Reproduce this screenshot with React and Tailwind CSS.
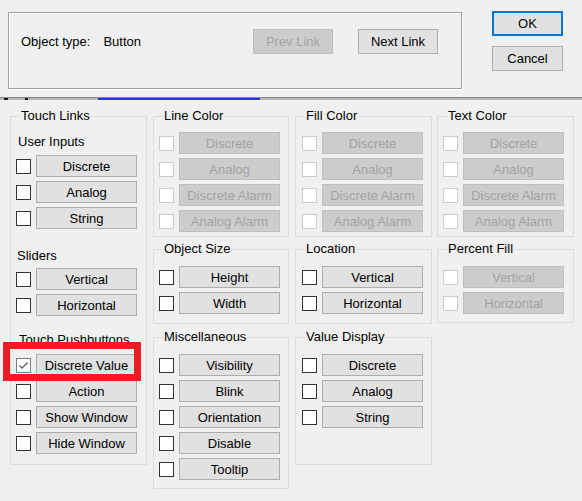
import React from "react";

function Check({ checked, disabled }) {
  return (
    <span
      className={`w-[15px] h-[15px] shrink-0 border bg-white flex items-center justify-center ${
        disabled ? "border-[#cccccc]" : checked ? "border-[#808080]" : "border-[#333333]"
      }`}
    >
      {checked && (
        <svg width="11" height="11" viewBox="0 0 11 11">
          <polyline points="1.5,5.5 4,8 9.5,2.5" fill="none" stroke="#606060" strokeWidth="1.4" />
        </svg>
      )}
    </span>
  );
}

function Btn({ children, disabled, className = "" }) {
  return (
    <div
      className={`h-[22px] w-[101px] flex items-center justify-center border text-[13px] leading-none ${
        disabled ? "bg-[#cccccc] border-[#bfbfbf] text-[#a3a3a3]" : "bg-[#e1e1e1] border-[#adadad] text-black"
      } ${className}`}
    >
      {children}
    </div>
  );
}

function Row({ label, disabled, checked }) {
  return (
    <div className="flex items-center gap-[5px]">
      <Check disabled={disabled} checked={checked} />
      <Btn disabled={disabled}>{label}</Btn>
    </div>
  );
}

function Rows({ items, disabled, className = "" }) {
  return (
    <div className={`flex flex-col gap-[4px] ${className}`}>
      {items.map((it) => (
        <Row key={it} label={it} disabled={disabled} />
      ))}
    </div>
  );
}

function Group({ title, h, children }) {
  return (
    <div className={`relative border border-[#dcdcdc] pl-[5px] ${h}`}>
      <span className="absolute -top-[9px] left-[9px] px-[1px] bg-[#f0f0f0] text-[13px] leading-[16px] text-black">
        {title}
      </span>
      {children}
    </div>
  );
}

const colorItems = ["Discrete", "Analog", "Discrete Alarm", "Analog Alarm"];

export default function App() {
  return (
    <div className="relative w-[582px] h-[501px] bg-[#f0f0f0] overflow-hidden font-['Liberation_Sans',Arial,sans-serif] text-[13px] text-black">
      {/* top panel */}
      <div className="h-[97px] flex items-start">
        <div className="ml-[8px] mt-[12px] w-[454px] h-[77px] border border-[#a0a0a0] shadow-[inset_1px_1px_0_#ffffff,1px_1px_0_#ffffff] flex items-start pt-[16px] pl-[12px] pr-[23px]">
          <div className="h-[25px] flex items-center">
            <span>Object type:</span>
            <span className="ml-[13px]">Button</span>
          </div>
          <div className="ml-auto flex gap-[25px]">
            <div className="w-[80px] h-[25px] flex items-center justify-center border border-[#bfbfbf] bg-[#cccccc] text-[#a3a3a3]">
              Prev Link
            </div>
            <div className="w-[80px] h-[25px] flex items-center justify-center border border-[#adadad] bg-[#e1e1e1]">
              Next Link
            </div>
          </div>
        </div>
        <div className="ml-[30px] mt-[11px] flex flex-col gap-[10px]">
          <div className="w-[71px] h-[25px] flex items-center justify-center border-2 border-[#0078d7] bg-[#e1e1e1]">
            OK
          </div>
          <div className="w-[71px] h-[25px] flex items-center justify-center border border-[#adadad] bg-[#e1e1e1]">
            Cancel
          </div>
        </div>
      </div>

      {/* divider */}
      <div className="h-[1px] bg-[#8a8a8a]" />
      <div className="h-[2px] bg-[#b4b4b4] flex">
        <span className="ml-[4px] w-[4px] bg-[#1a1a1a]" />
        <span className="ml-[17px] w-[3px] bg-[#1a1a1a]" />
        <span className="ml-[70px] w-[162px] bg-[#2438d8]" />
      </div>

      {/* link groups */}
      <div className="pt-[16px] pl-[10px] flex items-start">
        <div className="w-[137px]">
          <Group title="Touch Links" h="h-[349px]">
            <div className="mt-[17px] ml-[2px] leading-[16px]">User Inputs</div>
            <Rows items={["Discrete", "Analog", "String"]} className="mt-[5px]" />
            <div className="mt-[19px] ml-[1px] leading-[16px]">Sliders</div>
            <Rows items={["Vertical", "Horizontal"]} className="mt-[4px]" />
            <div className="mt-[16px] ml-[3px] leading-[16px]">Touch Pushbuttons</div>
            <div className="mt-[6px] flex flex-col gap-[4px]">
              <Row label="Discrete Value" checked />
              <Row label="Action" />
              <Row label="Show Window" />
              <Row label="Hide Window" />
            </div>
          </Group>
        </div>

        <div className="ml-[6px] w-[136px] flex flex-col">
          <Group title="Line Color" h="h-[121px]">
            <Rows items={colorItems} disabled className="mt-[15px]" />
          </Group>
          <div className="mt-[12px]">
            <Group title="Object Size" h="h-[75px]">
              <Rows items={["Height", "Width"]} className="mt-[16px]" />
            </Group>
          </div>
          <div className="mt-[13px]">
            <Group title="Miscellaneous" h="h-[152px]">
              <Rows items={["Visibility", "Blink", "Orientation", "Disable", "Tooltip"]} className="mt-[16px]" />
            </Group>
          </div>
        </div>

        <div className="ml-[6px] w-[137px] flex flex-col">
          <Group title="Fill Color" h="h-[121px]">
            <Rows items={colorItems} disabled className="mt-[15px] ml-[1px]" />
          </Group>
          <div className="mt-[12px]">
            <Group title="Location" h="h-[75px]">
              <Rows items={["Vertical", "Horizontal"]} className="mt-[16px] ml-[1px]" />
            </Group>
          </div>
          <div className="mt-[13px]">
            <Group title="Value Display" h="h-[128px]">
              <Rows items={["Discrete", "Analog", "String"]} className="mt-[16px] ml-[1px]" />
            </Group>
          </div>
        </div>

        <div className="ml-[5px] w-[137px] flex flex-col">
          <Group title="Text Color" h="h-[121px]">
            <Rows items={colorItems} disabled className="mt-[15px]" />
          </Group>
          <div className="mt-[12px]">
            <Group title="Percent Fill" h="h-[74px]">
              <Rows items={["Vertical", "Horizontal"]} disabled className="mt-[16px]" />
            </Group>
          </div>
        </div>
      </div>

      {/* highlight annotation */}
      <div className="absolute left-[3px] top-[342px] w-[138px] h-[39px] border-[7px] border-[#ec1c24]" />
    </div>
  );
}
